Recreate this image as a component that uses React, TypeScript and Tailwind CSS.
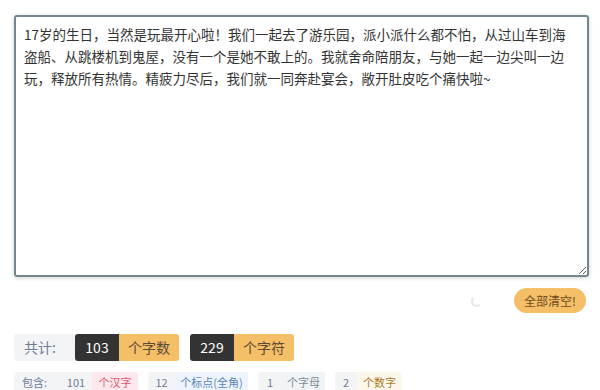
const text =
  "17岁的生日，当然是玩最开心啦！我们一起去了游乐园，派小派什么都不怕，从过山车到海盗船、从跳楼机到鬼屋，没有一个是她不敢上的。我就舍命陪朋友，与她一起一边尖叫一边玩，释放所有热情。精疲力尽后，我们就一同奔赴宴会，敞开肚皮吃个痛快啦~";

const font = { fontFamily: '"Noto Sans CJK SC", "Noto Sans", sans-serif' };

type Part = { n: number; label: string; tone: string; nw: string; lw: string };

const parts: Part[] = [
  { n: 12, label: "个标点(全角)", tone: "bg-[#edf4fc] text-[#5b87ba]", nw: "w-[27px]", lw: "w-[73px]" },
  { n: 1, label: "个字母", tone: "bg-[#f1f4f6] text-[#7d8c94]", nw: "w-[24px]", lw: "w-[43px]" },
  { n: 2, label: "个数字", tone: "bg-[#fdf6ea] text-[#a97a2b]", nw: "w-[22px]", lw: "w-[45px]" },
];

export default function App() {
  return (
    <div className="w-[600px] h-[390px] overflow-hidden bg-white" style={font}>
      <div className="pt-[15px] px-[14px] pr-[11px]">
        <textarea
          defaultValue={text}
          className="block w-[575px] h-[262px] rounded-[3px] border-2 border-[#73878f] pl-[8px] pr-[18px] py-[6px] text-[13.5px] leading-[22px] text-[#333] outline-none shadow-[0_1px_4px_rgba(0,0,0,0.18)]"
          style={font}
        />
      </div>

      <div className="flex items-center justify-end pr-[14px] mt-[11px] h-[25px]">
        <div className="w-[11px] h-[11px] rounded-full border-2 border-[#e5e7eb] border-r-transparent border-t-transparent mr-[32px] mt-[2px]" />
        <button className="h-[25px] w-[72px] rounded-full bg-[#f5bf67] text-[12px] text-[#6b4a1c]">
          全部清空!
        </button>
      </div>

      <div className="flex items-center gap-[11px] px-[14px] mt-[21px]">
        <div className="flex h-[27px] text-[14px]">
          <span className="flex items-center rounded-l-[3px] bg-[#f3f4f6] pl-[10px] w-[61px] text-[#6e7b99]">共计:</span>
          <span className="flex items-center justify-center rounded-l-[3px] bg-[#333] w-[44px] text-white">103</span>
          <span className="flex items-center justify-center rounded-r-[3px] bg-[#f5bf67] w-[60px] text-[#5a4a36]">个字数</span>
        </div>
        <div className="flex h-[27px] text-[14px]">
          <span className="flex items-center justify-center rounded-l-[3px] bg-[#333] w-[44px] text-white">229</span>
          <span className="flex items-center justify-center rounded-r-[3px] bg-[#f5bf67] w-[60px] text-[#5a4a36]">个字符</span>
        </div>
      </div>

      <div className="flex items-center gap-[10px] px-[14px] mt-[11px] text-[11px]">
        <div className="flex h-[20px]">
          <span className="flex items-center rounded-l-[3px] bg-[#f3f4f6] pl-[8px] w-[46px] text-[#6e7b99]">包含:</span>
          <span className="flex items-center justify-center bg-[#f3f4f6] w-[32px] text-[#6e7b99]">101</span>
          <span className="flex items-center justify-center rounded-r-[3px] w-[46px] bg-[#fde9ed] text-[#e0566e]">个汉字</span>
        </div>
        {parts.map((p) => (
          <div key={p.label} className="flex h-[20px]">
            <span className={"flex items-center justify-center rounded-l-[3px] bg-[#f3f4f6] text-[#6e7b99] " + p.nw}>{p.n}</span>
            <span className={"flex items-center justify-center rounded-r-[3px] " + p.lw + " " + p.tone}>{p.label}</span>
          </div>
        ))}
      </div>
    </div>
  );
}
